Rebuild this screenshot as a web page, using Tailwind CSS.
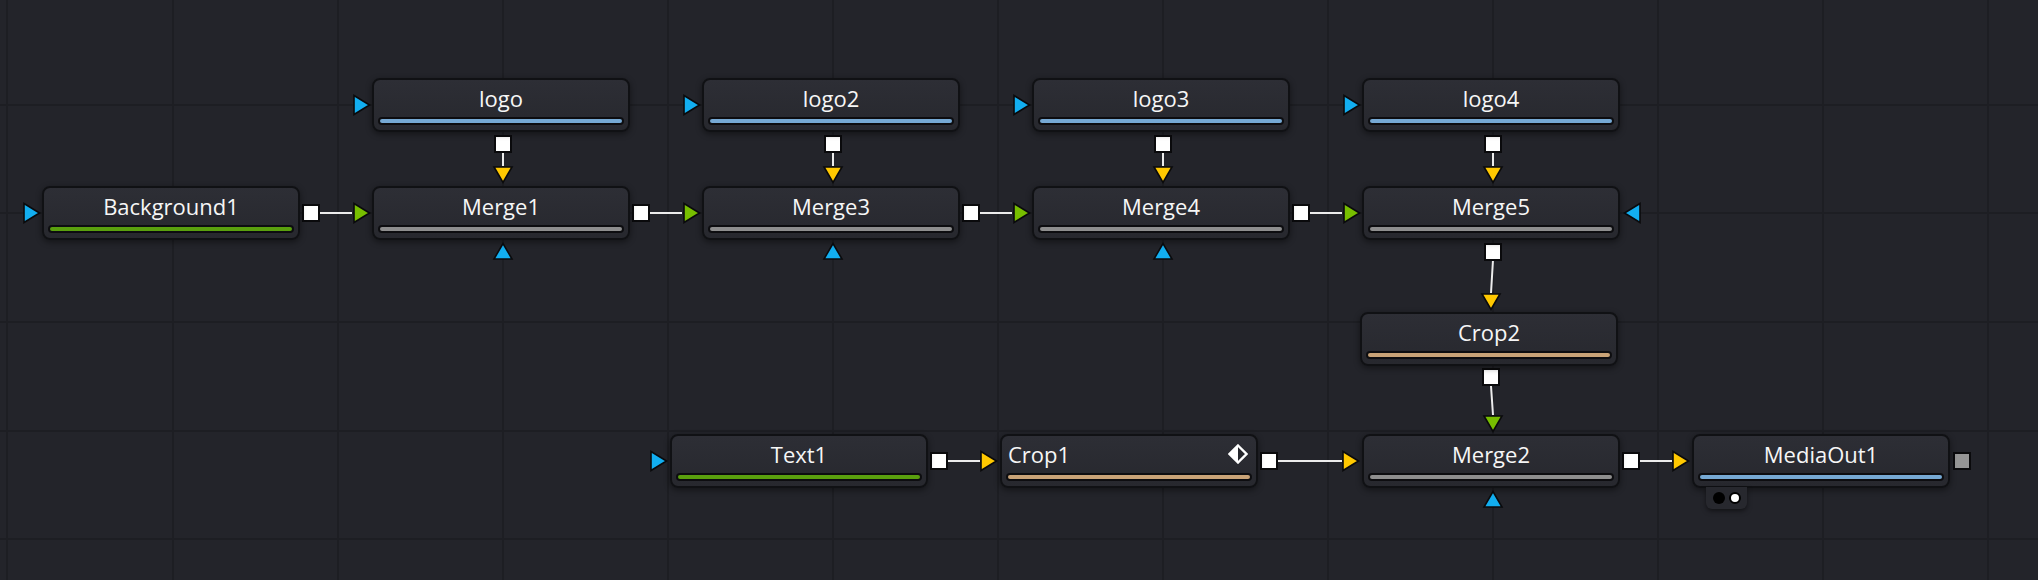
<!DOCTYPE html>
<html lang="en">
<head>
    <meta charset="UTF-8">
    <title>Node Editor</title>
    <script src="https://cdn.jsdelivr.net/npm/@tailwindcss/browser@4"></script>
</head>
<body class="bg-[#23242a] font-['Open_Sans',sans-serif] text-[22px] text-[#f6f6f6]">
    <div class="relative w-[2038px] h-[580px] overflow-hidden">
        <!-- grid + connectors -->
        <svg class="absolute inset-0" width="2038" height="580" fill="none">
            <defs>
                <polygon id="triR" points="1,1.5 16.5,11 1,20.5" stroke="#0a0a0c" stroke-width="1.6"/>
                <polygon id="triL" points="18,1.5 2.5,11 18,20.5" stroke="#0a0a0c" stroke-width="1.6"/>
                <polygon id="triD" points="2,1 20,1 11,16.5" stroke="#0a0a0c" stroke-width="1.6"/>
                <polygon id="triU" points="2,17 20,17 11,1.5" stroke="#0a0a0c" stroke-width="1.6"/>
                <rect id="sq" x="1" y="1" width="16" height="16" stroke="#0a0a0c" stroke-width="2"/>
            </defs>
            <g stroke="#1d1e23" stroke-width="2">
                <path d="M7 0V580M173 0V580M338 0V580M503 0V580M668 0V580M833 0V580M998 0V580M1163 0V580M1328 0V580M1493 0V580M1658 0V580M1823 0V580M1988 0V580"/>
                <path d="M0 105H2038M0 213H2038M0 322H2038M0 431H2038M0 539H2038"/>
            </g>
            <g stroke="#ececec" stroke-width="2">
                <path d="M320 213H352M650 213H682M980 213H1012M1310 213H1342"/>
                <path d="M503 152V166M833 152V166M1163 152V166M1493 152V166"/>
                <path d="M1493 260L1491 293M1491 386L1493 415"/>
                <path d="M948 461H980M1278 461H1342M1640 461H1672"/>
            </g>

            <!-- inputs -->
            <use href="#triR" x="23" y="202" fill="#12aef0"/>
            <use href="#triR" x="353" y="94" fill="#12aef0"/>
            <use href="#triR" x="683" y="94" fill="#12aef0"/>
            <use href="#triR" x="1013" y="94" fill="#12aef0"/>
            <use href="#triR" x="1343" y="94" fill="#12aef0"/>
            <use href="#triR" x="353" y="202" fill="#77be00"/>
            <use href="#triR" x="683" y="202" fill="#77be00"/>
            <use href="#triR" x="1013" y="202" fill="#77be00"/>
            <use href="#triR" x="1343" y="202" fill="#77be00"/>
            <use href="#triL" x="1622" y="202" fill="#12aef0"/>
            <use href="#triD" x="492" y="166" fill="#ffc800"/>
            <use href="#triD" x="822" y="166" fill="#ffc800"/>
            <use href="#triD" x="1152" y="166" fill="#ffc800"/>
            <use href="#triD" x="1482" y="166" fill="#ffc800"/>
            <use href="#triU" x="492" y="242" fill="#12aef0"/>
            <use href="#triU" x="822" y="242" fill="#12aef0"/>
            <use href="#triU" x="1152" y="242" fill="#12aef0"/>
            <use href="#triD" x="1480" y="293" fill="#ffc800"/>
            <use href="#triD" x="1482" y="415" fill="#77be00"/>
            <use href="#triU" x="1482" y="490" fill="#12aef0"/>
            <use href="#triR" x="650" y="450" fill="#12aef0"/>
            <use href="#triR" x="980" y="450" fill="#ffc800"/>
            <use href="#triR" x="1342" y="450" fill="#ffc800"/>
            <use href="#triR" x="1672" y="450" fill="#ffc800"/>

            <!-- outputs -->
            <use href="#sq" x="302" y="204" fill="#fff"/>
            <use href="#sq" x="632" y="204" fill="#fff"/>
            <use href="#sq" x="962" y="204" fill="#fff"/>
            <use href="#sq" x="1292" y="204" fill="#fff"/>
            <use href="#sq" x="494" y="135" fill="#fff"/>
            <use href="#sq" x="824" y="135" fill="#fff"/>
            <use href="#sq" x="1154" y="135" fill="#fff"/>
            <use href="#sq" x="1484" y="135" fill="#fff"/>
            <use href="#sq" x="1484" y="243" fill="#fff"/>
            <use href="#sq" x="1482" y="368" fill="#fff"/>
            <use href="#sq" x="930" y="452" fill="#fff"/>
            <use href="#sq" x="1260" y="452" fill="#fff"/>
            <use href="#sq" x="1622" y="452" fill="#fff"/>
            <use href="#sq" x="1953" y="452" fill="#959595"/>
        </svg>

        <!-- row 1 -->
        <div class="absolute left-[372px] top-[78px] w-[258px] h-[54px] flex flex-col rounded-[8px] border-2 border-[#101114] bg-gradient-to-b from-[#2d2e35] to-[#27282e] shadow-[0_2px_6px_rgba(0,0,0,0.45)]">
            <div class="flex-1 flex items-center justify-center leading-none pb-[2px]">logo</div>
            <div class="mx-[4px] mb-[5px] h-[8px] rounded-full border-2 border-[#0d0d10] bg-[#76a9d4]"></div>
        </div>
        <div class="absolute left-[702px] top-[78px] w-[258px] h-[54px] flex flex-col rounded-[8px] border-2 border-[#101114] bg-gradient-to-b from-[#2d2e35] to-[#27282e] shadow-[0_2px_6px_rgba(0,0,0,0.45)]">
            <div class="flex-1 flex items-center justify-center leading-none pb-[2px]">logo2</div>
            <div class="mx-[4px] mb-[5px] h-[8px] rounded-full border-2 border-[#0d0d10] bg-[#76a9d4]"></div>
        </div>
        <div class="absolute left-[1032px] top-[78px] w-[258px] h-[54px] flex flex-col rounded-[8px] border-2 border-[#101114] bg-gradient-to-b from-[#2d2e35] to-[#27282e] shadow-[0_2px_6px_rgba(0,0,0,0.45)]">
            <div class="flex-1 flex items-center justify-center leading-none pb-[2px]">logo3</div>
            <div class="mx-[4px] mb-[5px] h-[8px] rounded-full border-2 border-[#0d0d10] bg-[#76a9d4]"></div>
        </div>
        <div class="absolute left-[1362px] top-[78px] w-[258px] h-[54px] flex flex-col rounded-[8px] border-2 border-[#101114] bg-gradient-to-b from-[#2d2e35] to-[#27282e] shadow-[0_2px_6px_rgba(0,0,0,0.45)]">
            <div class="flex-1 flex items-center justify-center leading-none pb-[2px]">logo4</div>
            <div class="mx-[4px] mb-[5px] h-[8px] rounded-full border-2 border-[#0d0d10] bg-[#76a9d4]"></div>
        </div>

        <!-- row 2 -->
        <div class="absolute left-[42px] top-[186px] w-[258px] h-[54px] flex flex-col rounded-[8px] border-2 border-[#101114] bg-gradient-to-b from-[#2d2e35] to-[#27282e] shadow-[0_2px_6px_rgba(0,0,0,0.45)]">
            <div class="flex-1 flex items-center justify-center leading-none pb-[2px]">Background1</div>
            <div class="mx-[4px] mb-[5px] h-[8px] rounded-full border-2 border-[#0d0d10] bg-[#5aa00e]"></div>
        </div>
        <div class="absolute left-[372px] top-[186px] w-[258px] h-[54px] flex flex-col rounded-[8px] border-2 border-[#101114] bg-gradient-to-b from-[#2d2e35] to-[#27282e] shadow-[0_2px_6px_rgba(0,0,0,0.45)]">
            <div class="flex-1 flex items-center justify-center leading-none pb-[2px]">Merge1</div>
            <div class="mx-[4px] mb-[5px] h-[8px] rounded-full border-2 border-[#0d0d10] bg-[#8e8e8e]"></div>
        </div>
        <div class="absolute left-[702px] top-[186px] w-[258px] h-[54px] flex flex-col rounded-[8px] border-2 border-[#101114] bg-gradient-to-b from-[#2d2e35] to-[#27282e] shadow-[0_2px_6px_rgba(0,0,0,0.45)]">
            <div class="flex-1 flex items-center justify-center leading-none pb-[2px]">Merge3</div>
            <div class="mx-[4px] mb-[5px] h-[8px] rounded-full border-2 border-[#0d0d10] bg-[#8e8e8e]"></div>
        </div>
        <div class="absolute left-[1032px] top-[186px] w-[258px] h-[54px] flex flex-col rounded-[8px] border-2 border-[#101114] bg-gradient-to-b from-[#2d2e35] to-[#27282e] shadow-[0_2px_6px_rgba(0,0,0,0.45)]">
            <div class="flex-1 flex items-center justify-center leading-none pb-[2px]">Merge4</div>
            <div class="mx-[4px] mb-[5px] h-[8px] rounded-full border-2 border-[#0d0d10] bg-[#8e8e8e]"></div>
        </div>
        <div class="absolute left-[1362px] top-[186px] w-[258px] h-[54px] flex flex-col rounded-[8px] border-2 border-[#101114] bg-gradient-to-b from-[#2d2e35] to-[#27282e] shadow-[0_2px_6px_rgba(0,0,0,0.45)]">
            <div class="flex-1 flex items-center justify-center leading-none pb-[2px]">Merge5</div>
            <div class="mx-[4px] mb-[5px] h-[8px] rounded-full border-2 border-[#0d0d10] bg-[#8e8e8e]"></div>
        </div>

        <!-- crop2 -->
        <div class="absolute left-[1360px] top-[312px] w-[258px] h-[54px] flex flex-col rounded-[8px] border-2 border-[#101114] bg-gradient-to-b from-[#2d2e35] to-[#27282e] shadow-[0_2px_6px_rgba(0,0,0,0.45)]">
            <div class="flex-1 flex items-center justify-center leading-none pb-[2px]">Crop2</div>
            <div class="mx-[4px] mb-[5px] h-[8px] rounded-full border-2 border-[#0d0d10] bg-[#c9a377]"></div>
        </div>

        <!-- bottom row -->
        <div class="absolute left-[670px] top-[434px] w-[258px] h-[54px] flex flex-col rounded-[8px] border-2 border-[#101114] bg-gradient-to-b from-[#2d2e35] to-[#27282e] shadow-[0_2px_6px_rgba(0,0,0,0.45)]">
            <div class="flex-1 flex items-center justify-center leading-none pb-[2px]">Text1</div>
            <div class="mx-[4px] mb-[5px] h-[8px] rounded-full border-2 border-[#0d0d10] bg-[#5aa00e]"></div>
        </div>
        <div class="absolute left-[1000px] top-[434px] w-[258px] h-[54px] flex flex-col rounded-[8px] border-2 border-[#101114] bg-gradient-to-b from-[#2d2e35] to-[#27282e] shadow-[0_2px_6px_rgba(0,0,0,0.45)]">
            <div class="flex-1 flex items-center justify-between leading-none pb-[2px] pl-[6px] pr-[8px]">
                <span>Crop1</span>
                <svg width="20" height="20" viewBox="0 0 20 20">
                    <path d="M10 1.5L18.5 10L10 18.5L1.5 10Z" fill="#26272d" stroke="#fff" stroke-width="2.4"/>
                    <path d="M10 1L1 10L10 19Z" fill="#fff"/>
                </svg>
            </div>
            <div class="mx-[4px] mb-[5px] h-[8px] rounded-full border-2 border-[#0d0d10] bg-[#c9a377]"></div>
        </div>
        <div class="absolute left-[1362px] top-[434px] w-[258px] h-[54px] flex flex-col rounded-[8px] border-2 border-[#101114] bg-gradient-to-b from-[#2d2e35] to-[#27282e] shadow-[0_2px_6px_rgba(0,0,0,0.45)]">
            <div class="flex-1 flex items-center justify-center leading-none pb-[2px]">Merge2</div>
            <div class="mx-[4px] mb-[5px] h-[8px] rounded-full border-2 border-[#0d0d10] bg-[#8e8e8e]"></div>
        </div>
        <div class="absolute left-[1692px] top-[434px] w-[258px] h-[54px] flex flex-col rounded-[8px] border-2 border-[#101114] bg-gradient-to-b from-[#2d2e35] to-[#27282e] shadow-[0_2px_6px_rgba(0,0,0,0.45)]">
            <div class="flex-1 flex items-center justify-center leading-none pb-[2px]">MediaOut1</div>
            <div class="mx-[4px] mb-[5px] h-[8px] rounded-full border-2 border-[#0d0d10] bg-[#76a9d4]"></div>
        </div>
        <!-- view buttons under MediaOut1 -->
        <div class="absolute left-[1706px] top-[487px] w-[41px] h-[22px] flex items-center justify-center gap-[4px] rounded-b-[6px] bg-[#27282e] shadow-[0_2px_5px_rgba(0,0,0,0.5)]">
            <span class="size-[12px] rounded-full bg-black"></span>
            <span class="size-[12px] rounded-full bg-white border-2 border-black"></span>
        </div>
    </div>
</body>
</html>
